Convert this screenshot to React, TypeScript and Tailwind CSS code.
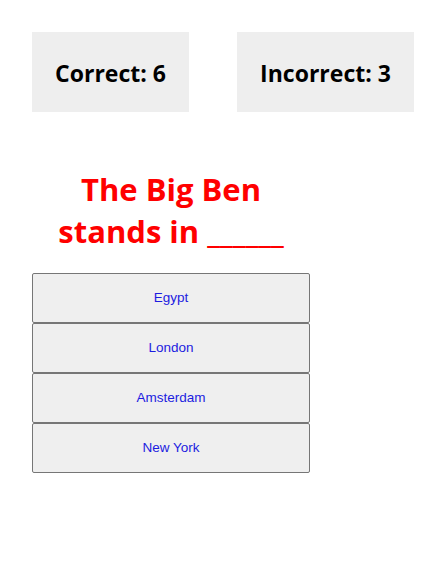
import React from 'react';

const answers = ['Egypt', 'London', 'Amsterdam', 'New York'];

const App: React.FC = () => {
  return (
    <div className="min-h-screen bg-white pt-8 pl-8" style={{ fontFamily: '"Open Sans", "Noto Sans", sans-serif' }}>
      {/* Score */}
      <div className="flex gap-12">
        <div className="w-[157px] h-20 pt-[3px] bg-[#eeeeee] flex items-center justify-center text-[23px] font-bold text-black">
          Correct: 6
        </div>
        <div className="w-[177px] h-20 pt-[3px] bg-[#eeeeee] flex items-center justify-center text-[23px] font-bold text-black">
          Incorrect: 3
        </div>
      </div>

      {/* Question */}
      <div className="w-[278px]">
        <h1 className="mt-[56px] text-center text-[31px] leading-[42px] font-bold text-[#ff0000]">
          The Big Ben
          <br />
          stands in ______
        </h1>

        <div className="mt-[21px] flex flex-col">
          {answers.map((a) => (
            <button
              key={a}
              className="h-[50px] w-full bg-[#efefef] border border-[#767676] rounded-[2px] text-[13.5px] text-[#1c1ce0]"
              style={{ fontFamily: '"Liberation Sans", Arial, sans-serif' }}
            >
              {a}
            </button>
          ))}
        </div>
      </div>
    </div>
  );
};

export default App;
